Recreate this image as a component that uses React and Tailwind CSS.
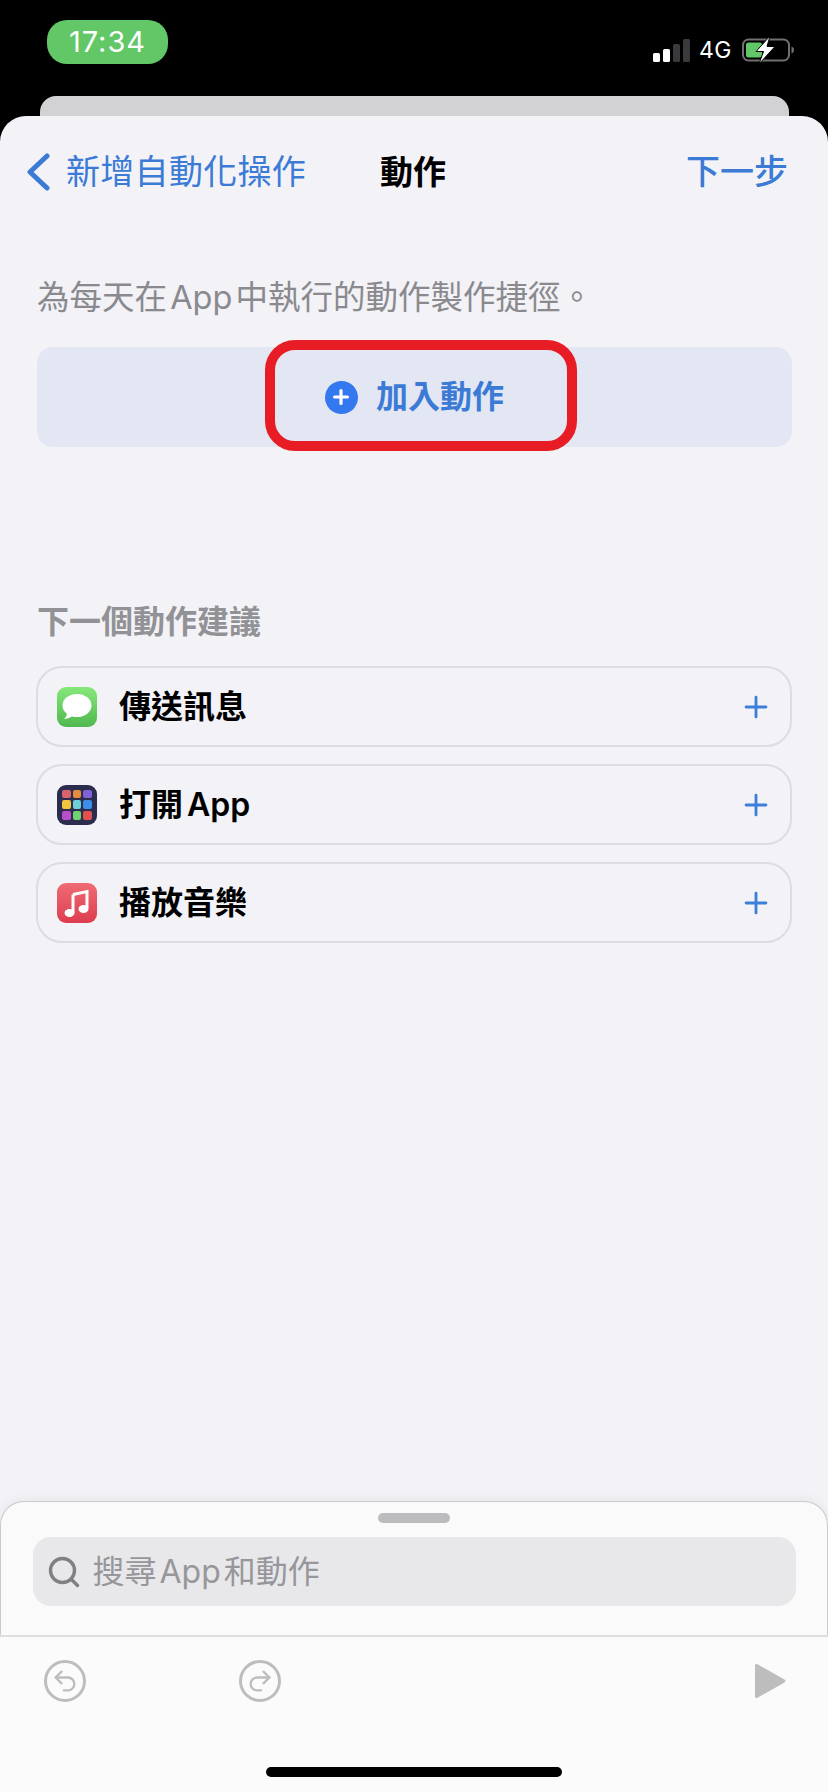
import { Plus, Search, Undo2, Redo2 } from 'lucide-react';

const FONT = 'font-["Inter","Noto_Sans_CJK_TC",sans-serif]';

function StatusBar() {
  return (
    <div className="h-[96px] flex justify-between relative">
      <div className="ml-[47px] mt-[20px] w-[121px] h-[44px] rounded-[20px] bg-[#62c766] flex items-center justify-center text-white text-[29px] tracking-[1px]">
        17:34
      </div>
      <div className="mr-[34px] mt-[36px] h-[28px] flex items-center">
        <div className="flex items-end gap-[3px] h-[23px]">
          <div className="w-[7px] h-[9px] rounded-[1.5px] bg-white" />
          <div className="w-[7px] h-[13px] rounded-[1.5px] bg-white" />
          <div className="w-[7px] h-[18px] rounded-[1.5px] bg-[#3a3a3c]" />
          <div className="w-[7px] h-[23px] rounded-[1.5px] bg-[#3a3a3c]" />
        </div>
        <span className="ml-[9px] w-[33px] text-white text-[23px] leading-[24px] tracking-[0.5px]">4G</span>
        <svg className="ml-[10px]" width="52" height="28" viewBox="0 0 52 28">
          <rect x="1" y="3.500" width="46" height="21" rx="5.500" fill="none" stroke="#707072" strokeWidth="2" />
          <rect x="4" y="6.500" width="16" height="15" rx="2.500" fill="#62c766" />
          <path d="M49.500 10.500c1.500.5 2.500 1.800 2.500 3.500s-1 3-2.500 3.500z" fill="#707072" />
          <path d="M28 0 14 15.500h7.500L17 28l16-17.500h-8z" fill="#fff" stroke="#000" strokeWidth="1" />
        </svg>
      </div>
    </div>
  );
}

function MessagesIcon() {
  return (
    <div className="w-[40px] h-[40px] rounded-[9px] bg-linear-to-b from-[#86e87a] to-[#4fb84f] flex items-center justify-center">
      <svg width="32" height="30" viewBox="0 0 32 30">
        <ellipse cx="16" cy="13.500" rx="14.500" ry="11.500" fill="#fff" />
        <path d="M6 20c0 3-1 5.500-3 7 3.500 0 6.500-1.200 9-3.500z" fill="#fff" />
      </svg>
    </div>
  );
}

function AppsIcon() {
  const colors = [
    'bg-[#d9646c]', 'bg-[#e58d3f]', 'bg-[#8061d6]',
    'bg-[#f0c53f]', 'bg-[#6dd0d8]', 'bg-[#3d8ee8]',
    'bg-[#b84fc9]', 'bg-[#6fd36f]', 'bg-[#e0504f]',
  ];
  return (
    <div className="w-[40px] h-[40px] rounded-[9px] bg-[#2c2c4f] grid grid-cols-3 gap-[2px] p-[5px]">
      {colors.map((c, i) => (
        <div key={i} className={`rounded-[2px] ${c}`} />
      ))}
    </div>
  );
}

function MusicIcon() {
  return (
    <div className="w-[40px] h-[40px] rounded-[9px] bg-linear-to-b from-[#ef6b73] to-[#dd3c50] flex items-center justify-center">
      <svg width="28" height="30" viewBox="0 0 28 30">
        <path d="M10 6.500 24 3.500V20" fill="none" stroke="#fff" strokeWidth="3" />
        <path d="M10 6.500V25" fill="none" stroke="#fff" strokeWidth="3" />
        <ellipse cx="6.500" cy="25" rx="5" ry="4" fill="#fff" />
        <ellipse cx="20.500" cy="21" rx="5" ry="4" fill="#fff" />
      </svg>
    </div>
  );
}

function SuggestionRow({ icon, label }) {
  return (
    <div className="h-[81px] rounded-[26px] border-2 border-[#dcdce1] flex items-center pl-[19px] pr-[17px]">
      {icon}
      <span className="ml-[22px] flex-1 text-[32px] leading-[40px] font-semibold text-black [word-spacing:-4px]">{label}</span>
      <Plus className="text-[#3b7fd9]" size={34} strokeWidth={2} />
    </div>
  );
}

function CircleAction({ children }) {
  return (
    <div className="w-[42px] h-[42px] rounded-full border-[3px] border-[#bdbdbd] flex items-center justify-center text-[#bdbdbd]">
      {children}
    </div>
  );
}

export default function App() {
  return (
    <div className={`w-[828px] h-[1792px] bg-black flex flex-col overflow-hidden ${FONT}`}>
      <StatusBar />
      <div className="ml-[40px] mr-[39px] h-[20px] rounded-t-[16px] bg-[#d2d2d5]" />

      <div className="flex-1 rounded-t-[26px] bg-[#f2f2f7] flex flex-col">
        {/* nav */}
        <div className="h-[112px] grid grid-cols-[354px_auto_1fr] items-center pl-[26px] pr-[40px]">
          <div className="flex items-center text-[#3b7bd6]">
            <svg width="24" height="38" viewBox="0 0 24 38" fill="none">
              <path d="M21 3 4 19l17 16" stroke="currentColor" strokeWidth="5" strokeLinecap="round" strokeLinejoin="round" />
            </svg>
            <span className="ml-[16px] text-[34px] leading-[40px] tracking-[0.3px]">新增自動化操作</span>
          </div>
          <span className="text-[33px] leading-[40px] font-semibold text-black">動作</span>
          <span className="justify-self-end text-[34px] leading-[40px] font-medium text-[#3b7bd6]">下一步</span>
        </div>

        <div className="mt-[51px] ml-[37px] text-[32.500px] leading-[38px] text-[#8a8a8e] [word-spacing:-6px]">為每天在 App 中執行的動作製作捷徑。</div>

        {/* add action */}
        <div className="relative mt-[30px] ml-[37px] mr-[36px] h-[100px] rounded-[16px] bg-[#e3e6f3] flex items-center justify-center">
          <div className="w-[33px] h-[33px] rounded-full bg-[#3478f0] flex items-center justify-center">
            <Plus className="text-white" size={22} strokeWidth={3.500} />
          </div>
          <span className="ml-[18px] text-[32px] leading-[40px] font-semibold text-[#3b7bd6]">加入動作</span>
          <div className="absolute left-[228px] top-[-7px] w-[312px] h-[111px] rounded-[30px] border-[10px] border-[#e81c24]" />
        </div>

        <div className="mt-[155px] ml-[37px] text-[32px] leading-[40px] font-semibold text-[#929296]">下一個動作建議</div>

        <div className="mt-[24px] mx-[36px] flex flex-col gap-[17px]">
          <SuggestionRow icon={<MessagesIcon />} label="傳送訊息" />
          <SuggestionRow icon={<AppsIcon />} label="打開 App" />
          <SuggestionRow icon={<MusicIcon />} label="播放音樂" />
        </div>

        {/* action search sheet */}
        <div className="mt-auto h-[134px] rounded-t-[24px] border border-b-0 border-[#c9c9cf] bg-[#fafafa] shadow-[0_-4px_10px_rgba(0,0,0,0.04)] flex flex-col items-center">
          <div className="mt-[11px] w-[72px] h-[10px] rounded-full bg-[#bcbcbe]" />
          <div className="mt-[14px] w-[763px] h-[69px] rounded-[18px] bg-[#e8e8ea] flex items-center pl-[13px]">
            <Search className="text-[#808084]" size={36} strokeWidth={2.250} />
            <span className="ml-[11px] text-[32px] leading-[40px] text-[#97979b] [word-spacing:-6px]">搜尋 App 和動作</span>
          </div>
        </div>

        {/* toolbar */}
        <div className="h-[157px] border-t-2 border-[#dededf] bg-[#fbfbfb] flex flex-col">
          <div className="h-[88px] flex items-center pl-[44px] pr-[42px]">
            <CircleAction>
              <Undo2 size={28} strokeWidth={2} />
            </CircleAction>
            <div className="ml-[153px]">
              <CircleAction>
                <Redo2 size={28} strokeWidth={2} />
              </CircleAction>
            </div>
            <svg className="ml-auto" width="32" height="36" viewBox="0 0 32 36">
              <path d="M1 2.500C1 1 2.500.5 3.500 1.200L30.500 16.500c1.300.8 1.300 2.200 0 3L3.500 34.800C2.500 35.500 1 35 1 33.500z" fill="#bdbdbd" />
            </svg>
          </div>
          <div className="mt-[42px] mx-auto w-[296px] h-[10px] rounded-full bg-black" />
        </div>
      </div>
    </div>
  );
}
